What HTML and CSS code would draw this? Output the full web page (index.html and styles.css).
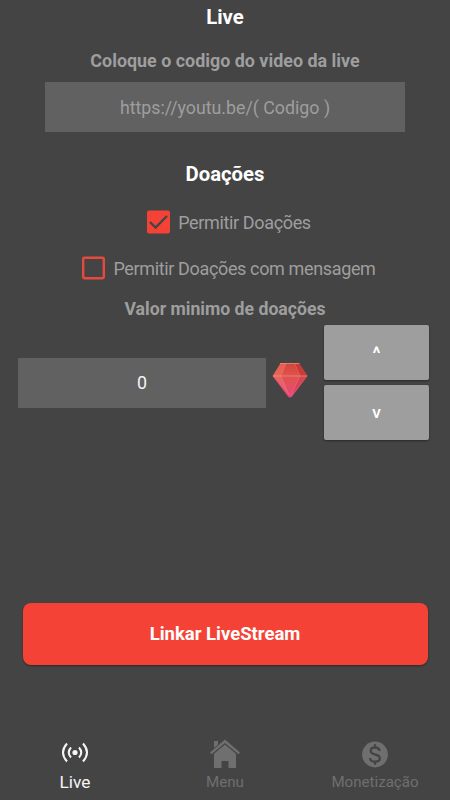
FILE: index.html
```html
<!DOCTYPE html>
<html lang="pt-BR">

<head>
    <meta charset="UTF-8">
    <meta name="viewport" content="width=device-width, initial-scale=1.0">
    <title>Live</title>
    <link rel="stylesheet" href="styles.css">
</head>

<body>
    <main class="content">
        <h1 class="title">Live</h1>
        <label class="subtitle" for="codigo">Coloque o codigo do video da live</label>
        <input class="field" id="codigo" type="text" placeholder="https://youtu.be/( Codigo )">

        <h2 class="title donations-title">Doações</h2>

        <label class="check">
            <input type="checkbox" checked>
            <svg class="box" viewBox="0 0 24 24">
                <rect x="0" y="0.5" width="23" height="23" rx="2" fill="#f44336" />
                <path d="M3 12l5.500 5.500L20 6" fill="none" stroke="#444" stroke-width="2.3" />
            </svg>
            <span>Permitir Doações</span>
        </label>
        <label class="check">
            <input type="checkbox">
            <svg class="box" viewBox="0 0 24 24">
                <rect x="1.2" y="1.7" width="20.6" height="20.6" rx="1.2" fill="none" stroke="#e64a3e" stroke-width="2.4" />
            </svg>
            <span>Permitir Doações com mensagem</span>
        </label>

        <p class="subtitle min-label">Valor minimo de doações</p>

        <div class="amount">
            <input class="field value" type="text" value="0">
            <svg class="gem" viewBox="0 0 36 36">
                <defs>
                    <linearGradient id="gemFill" x1="0" y1="0" x2="0" y2="1">
                        <stop offset="0" stop-color="#d2453b" />
                        <stop offset="0.4" stop-color="#e05350" />
                        <stop offset="1" stop-color="#e9467c" />
                    </linearGradient>
                </defs>
                <path d="M8.5 1h18.500L35.500 14 20 34.500q-2 2-4 0L0.500 14z" fill="url(#gemFill)" />
                <path d="M8.500 1.500L1 14h8L14 1.500z" fill="#ee7161" opacity="0.6" />
                <path d="M27 1.500L35.500 14H28L23 3z" fill="#c2302c" opacity="0.6" />
                <path d="M9 14L17 33 1 14z" fill="#f2717a" opacity="0.5" />
                <path d="M28 14L19 33 35 14z" fill="#c9304f" opacity="0.4" />
                <path d="M1 14h34M8 1.500h19.500" fill="none" stroke="#f7a58c" stroke-width="0.7" opacity="0.8" />
                <path d="M9 14L14 2M28 14L23 2M9 14L17 33M28 14L19 33" fill="none" stroke="#f28d7c" stroke-width="0.6" opacity="0.6" />
            </svg>
            <div class="steppers">
                <button class="step step-up" type="button">^</button>
                <button class="step" type="button">V</button>
            </div>
        </div>

        <button class="submit" type="button">Linkar LiveStream</button>
    </main>

    <nav class="tabs">
        <a class="tab active">
            <svg class="tab-icon" viewBox="0 0 30 30">
                <circle cx="15" cy="14.500" r="2.600" fill="currentColor" />
                <path d="M11 9.500q-4.500 5 0 10M19 9.500q4.500 5 0 10M7 5.500q-8 9 0 18M23 5.500q8 9 0 18" fill="none" stroke="currentColor" stroke-width="2" />
            </svg>
            <span>Live</span>
        </a>
        <a class="tab">
            <svg class="tab-icon" viewBox="0 0 30 30" fill="currentColor">
                <path d="M15 1.500L0 14.500l1.500 1.700L15 5l13.500 11.200 1.500-1.700zM4 3h4v3.500L4 10z" />
                <path d="M15 6.500L4 15.700V30h7.500v-7h7v7H26V15.700z" />
            </svg>
            <span>Menu</span>
        </a>
        <a class="tab">
            <svg class="tab-icon" viewBox="0 0 30 30">
                <circle cx="15" cy="16.500" r="12.900" fill="currentColor" />
                <path d="M19.500 13q-.3-3.500-4.500-3.500-4.300 0-4.300 3.300 0 2.700 4.300 3.700 4.800 1 4.800 3.800 0 3.400-4.800 3.400-4.700 0-5-3.700M15 6.300V9.500M15 23.500v3.200" fill="none" stroke="#444" stroke-width="2.3" />
            </svg>
            <span>Monetização</span>
        </a>
    </nav>
</body>

</html>
```
FILE: styles.css
```css
* {
    box-sizing: border-box;
}

body {
    margin: 0;
    height: 100vh;
    display: flex;
    flex-direction: column;
    background-color: #444;
    color: #9e9e9e;
    font-family: Roboto, sans-serif;
    font-size: 18px;
    overflow: hidden;
}

.content {
    flex: 1;
    display: flex;
    flex-direction: column;
    align-items: center;
}

.title {
    margin: 5px 0 0;
    font-size: 20.3px;
    line-height: 24px;
    font-weight: bold;
    color: #fff;
}

.subtitle {
    margin: 20px 0 0;
    font-size: 17.9px;
    line-height: 24px;
    font-weight: bold;
}

.field {
    width: 360px;
    height: 50px;
    margin-top: 9px;
    padding: 0;
    border: none;
    outline: none;
    background-color: #616161;
    color: #f5f5f5;
    font-family: inherit;
    font-size: 17.8px;
    text-align: center;
}

.field::placeholder {
    color: #9e9e9e;
}

.donations-title {
    margin-top: 30px;
}

/* Checkboxes */
.check {
    display: flex;
    align-items: center;
    gap: 7px;
    height: 46px;
    padding-left: 8px;
    letter-spacing: -0.36px;
}

.donations-title + .check {
    margin-top: 13px;
}

.check input {
    display: none;
}

.box {
    width: 24px;
    height: 24px;
}

.min-label {
    margin-top: 6px;
    font-size: 17.65px;
}

/* Valor minimo */
.amount {
    width: 100%;
    margin-top: 4px;
    padding: 0 21px 0 18px;
    display: flex;
    align-items: center;
}

.value {
    width: 248px;
    margin: 0;
}

.gem {
    width: 36px;
    height: 36px;
    margin: 0 0 5px 6px;
}

.steppers {
    margin-left: auto;
    display: flex;
    flex-direction: column;
    gap: 5px;
}

.step {
    width: 105px;
    height: 55px;
    padding: 2px 0 0;
    border: none;
    border-radius: 2px;
    background-color: #9e9e9e;
    box-shadow: 0 1px 2px rgba(0, 0, 0, 0.4);
    color: #fff;
    font-family: inherit;
    font-size: 13px;
    font-weight: bold;
}

.step-up {
    font-size: 18px;
}

.submit {
    width: 405px;
    height: 62px;
    margin-top: 163px;
    border: none;
    border-radius: 8px;
    background-color: #f44336;
    box-shadow: 0 1px 2px rgba(0, 0, 0, 0.4);
    color: #fff;
    font-family: inherit;
    font-size: 18.5px;
    font-weight: bold;
}

/* Menu inferior */
.tabs {
    height: 62px;
    display: grid;
    grid-template-columns: repeat(3, 1fr);
}

.tab {
    display: flex;
    flex-direction: column;
    align-items: center;
    color: #6f6f6f;
    font-size: 15.1px;
    line-height: 24px;
}

.tab-icon {
    width: 30px;
    height: 30px;
    margin-bottom: 2px;
}

.active {
    color: #f5f5f5;
    font-size: 17.3px;
}
```
